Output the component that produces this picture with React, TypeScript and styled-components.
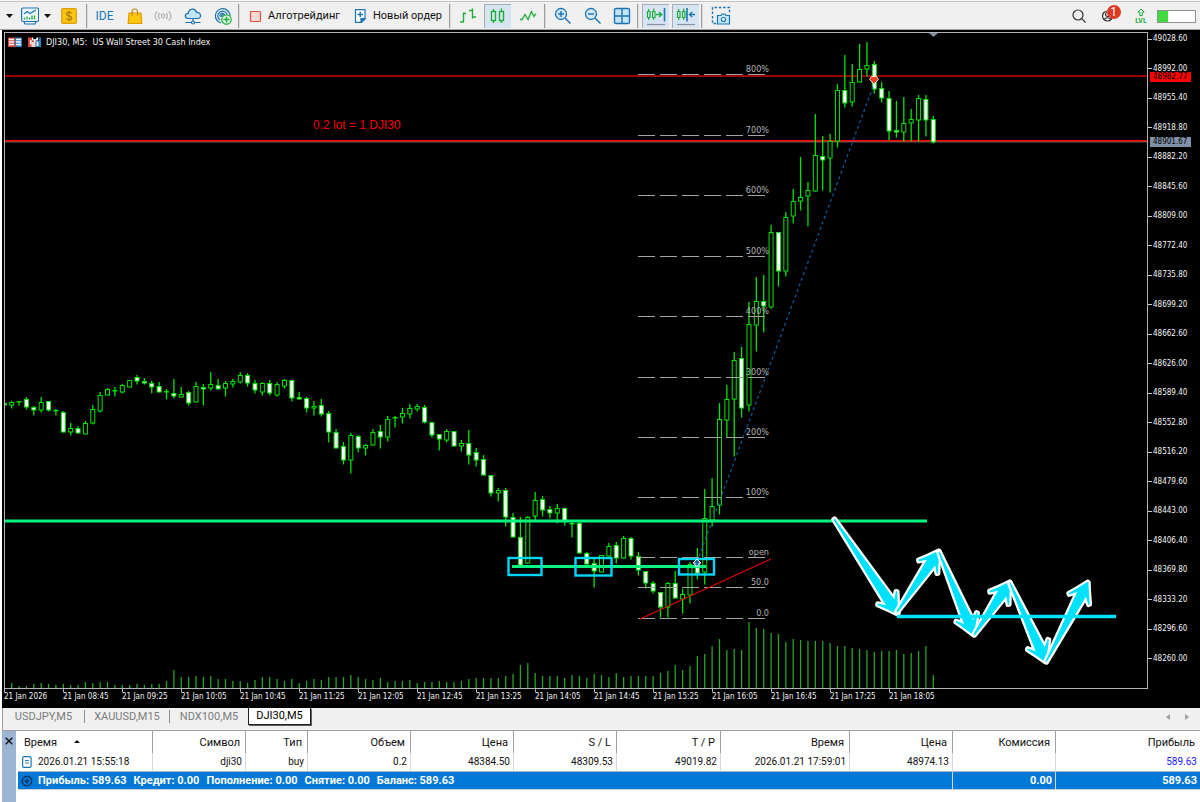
import React from "react";
import styled, { createGlobalStyle } from "styled-components";

const UI_FONT = `Roboto, "Noto Sans", sans-serif`;
const CHART_FONT = `"DejaVu Sans Condensed", "DejaVu Sans", sans-serif`;

const GlobalStyle = createGlobalStyle`
  * { box-sizing: border-box; }
  body { margin: 0; background: #fff; font-family: ${UI_FONT}; color: #111; }
  button { font: inherit; color: inherit; border: 0; background: none; padding: 0; margin: 0; cursor: pointer; }
  svg { display: block; }
`;

const Window = styled.main`
  min-height: 100vh;
  display: flex;
  flex-direction: column;
  overflow: hidden;
`;

/* ---------- toolbar ---------- */

const Toolbar = styled.header`
  display: flex;
  align-items: center;
  height: 30px;
  padding: 2px 4px 0 2px;
  background: #f0f0f0;
  border-top: 1px solid #f8f8f8;
  border-bottom: 1px solid #a0a0a0;
  box-shadow: inset 0 1px 0 #c4c4c4;
  font-size: 11px;
  line-height: 16px;
`;

const Tool = styled.button<{ $w: number; $active?: boolean }>`
  flex: none;
  display: flex;
  align-items: center;
  justify-content: center;
  width: ${(p) => p.$w}px;
  height: 24px;
  color: #1c78b8;
  background: ${(p) => (p.$active ? "#d7e5f3" : "transparent")};
  box-shadow: ${(p) => (p.$active ? "inset 1px 1px 0 #a6adb5" : "none")};
`;

const WordTool = styled(Tool)`
  font-size: 12px;
`;

const TextTool = styled(Tool)`
  justify-content: flex-start;
  padding-left: 9px;
  gap: 5px;
  color: #111;
  white-space: nowrap;
`;

const ToolGroup = styled.div`
  display: flex;
  gap: 3px;
  padding: 0 2px 0 3px;
`;

const Separator = styled.span`
  flex: none;
  width: 2px;
  height: 24px;
  border-left: 1px solid #9c9c9c;
  border-right: 1px solid #dcdcdc;
`;

const Spacer = styled.span`
  flex: 1;
`;

const BadgeHost = styled.span`
  position: relative;
`;

const Badge = styled.span`
  position: absolute;
  left: 5px;
  top: -4px;
  width: 14px;
  height: 14px;
  border-radius: 7px;
  background: #e03a24;
  color: #fff;
  font-size: 12px;
  line-height: 14px;
  text-align: center;
`;

const Battery = styled.span`
  flex: none;
  width: 39px;
  height: 13px;
  border: 1px solid #909090;
  background: linear-gradient(90deg, #3fdc3f 10px, #fff 10px);
`;

/* ---------- chart ---------- */

const ChartArea = styled.section`
  display: grid;
  grid-template-columns: minmax(0, 1fr) 52px;
  margin-left: 2px;
  padding: 2px 0 0 2px;
  background: #000;
  color: #f4f4f4;
  font-family: ${CHART_FONT};
  font-size: 8px;
  line-height: 10px;
`;

const Plot = styled.div`
  border: 1px solid #b4b4b8;
  height: 657px;
`;

const Canvas = styled.svg`
  width: 100%;
  height: 655px;
  font-family: ${CHART_FONT};
  font-size: 9px;
`;

const PriceAxis = styled.div`
  position: relative;
`;

const PriceList = styled.ul`
  list-style: none;
  margin: 0;
  padding: 2px 0 25px;
  height: 657px;
  display: flex;
  flex-direction: column;
  justify-content: space-between;
`;

const PriceLabel = styled.li`
  display: flex;
  align-items: center;
  gap: 1px;
  &::before {
    content: "";
    width: 4px;
    height: 1px;
    background: #c8c8c8;
  }
`;

const PriceTag = styled.span<{ $top: number; $bg: string }>`
  position: absolute;
  left: 2px;
  top: ${(p) => p.$top}px;
  width: 41px;
  padding-left: 3px;
  background: ${(p) => p.$bg};
  color: #000;
`;

const TimeAxis = styled.ul`
  grid-column: 1 / -1;
  list-style: none;
  margin: 0;
  padding: 0;
  height: 19px;
  display: flex;
  overflow: hidden;
`;

const TimeLabel = styled.li`
  flex: none;
  width: 59px;
  padding-top: 3px;
  white-space: nowrap;
  background: linear-gradient(#b4b4b8, #b4b4b8) 0 0 / 1px 3px no-repeat;
`;

/* ---------- chart tabs ---------- */

const TabBar = styled.nav`
  display: flex;
  height: 22px;
  margin-left: 2px;
  padding-right: 4px;
  background: #f0f0f0;
  border-left: 1px solid #a0a0a0;
  font-size: 11px;
  line-height: 16px;
  color: #7c7c7c;
`;

const Tab = styled.button<{ $w: number; $active?: boolean }>`
  flex: none;
  height: 17px;
  width: ${(p) => p.$w}px;
  ${(p) =>
    p.$active &&
    `background: #fff; color: #000; border: 1px solid #202020; border-top: 0; box-shadow: 1px 1px 0 #606060;`}
`;

const TabDivider = styled.span`
  flex: none;
  width: 1px;
  height: 13px;
  margin-top: 2px;
  background: #909090;
`;

const Scroller = styled.button`
  width: 19px;
  height: 17px;
  display: flex;
  align-items: center;
  justify-content: center;
`;

/* ---------- trade table ---------- */

const Terminal = styled.section`
  flex: 1;
  display: grid;
  grid-template-columns: 14px minmax(0, 1fr);
  margin-left: 2px;
  border-top: 1px solid #a0a0a0;
`;

const Gutter = styled.div`
  background: #9bb4d4;
  padding-top: 5px;
`;

const CloseButton = styled.button`
  display: flex;
  width: 14px;
  height: 9px;
  justify-content: center;
  align-items: center;
`;

const Trades = styled.table`
  width: calc(100% - 2px);
  margin-left: 2px;
  table-layout: fixed;
  border-collapse: separate;
  border-spacing: 0;
  font-size: 11px;
  line-height: 18px;
  align-self: start;
  white-space: nowrap;
`;

const Th = styled.th<{ $left?: boolean }>`
  height: 22px;
  padding: 2px 5px 0 6px;
  font-weight: 400;
  text-align: ${(p) => (p.$left ? "left" : "right")};
  border-right: 1px solid #a0a0a0;
  &:last-child { border-right: 0; }
`;

const Td = styled.td<{ $left?: boolean; $color?: string }>`
  height: 18px;
  padding: 0 3px;
  font-size: 10px;
  text-align: ${(p) => (p.$left ? "left" : "right")};
  color: ${(p) => p.$color ?? "inherit"};
  border-right: 1px solid #d8d8d8;
  &:last-child { border-right: 0; }
`;

const TotalTd = styled(Td)`
  font-size: 11px;
  line-height: 17px;
  background: #0078d7;
  color: #fff;
  font-weight: 700;
  border-top: 1px solid #a8b8c8;
  border-bottom: 1px solid #c8d0d8;
`;

const CellLine = styled.span`
  display: flex;
  align-items: center;
  gap: 5px;
`;

const Totals = styled.span`
  display: flex;
  gap: 7px;
`;

const SortMark = styled.span`
  display: inline-block;
  margin-left: 17px;
  vertical-align: 3px;
  border: 3px solid transparent;
  border-top: 0;
  border-bottom: 3px solid #111;
`;

/* ---------- data ---------- */

// high, body top, body bottom, low, 1 = falling (solid) body
type Candle = [number, number, number, number, 0 | 1];

const candles: Candle[] = [
  [402, 403, 405, 405, 1], [401, 402, 405, 408, 0], [401, 401, 402, 405, 0], [397, 399, 407, 409, 1],
  [406, 407, 410, 415, 1], [397, 402, 410, 412, 0], [401, 401, 410, 411, 1], [409, 410, 411, 415, 1],
  [411, 412, 432, 432, 1], [423, 428, 432, 435, 0], [426, 428, 433, 433, 1], [421, 423, 434, 434, 0],
  [405, 409, 423, 424, 0], [392, 395, 411, 412, 0], [388, 389, 395, 395, 0], [387, 390, 391, 396, 1],
  [384, 385, 392, 393, 0], [380, 380, 387, 387, 0], [375, 377, 381, 384, 1], [378, 381, 383, 384, 1],
  [381, 383, 387, 393, 1], [382, 386, 392, 392, 1], [389, 391, 392, 399, 1], [379, 393, 396, 398, 1],
  [387, 394, 397, 397, 0], [391, 392, 403, 405, 1], [382, 386, 402, 402, 0], [384, 387, 389, 405, 1],
  [372, 384, 388, 390, 0], [379, 385, 389, 389, 1], [381, 383, 388, 396, 0], [379, 381, 384, 387, 0],
  [372, 375, 382, 383, 0], [373, 375, 383, 386, 1], [380, 383, 390, 393, 1], [382, 383, 392, 395, 0],
  [380, 383, 393, 395, 1], [382, 384, 395, 396, 0], [379, 380, 386, 388, 0], [380, 380, 398, 401, 1],
  [392, 397, 399, 399, 1], [397, 398, 408, 412, 1], [401, 406, 408, 415, 0], [399, 405, 414, 416, 1],
  [411, 413, 432, 442, 1], [429, 432, 448, 448, 1], [442, 446, 460, 464, 1], [433, 435, 460, 473, 0],
  [435, 436, 448, 452, 1], [444, 445, 448, 455, 0], [429, 432, 445, 445, 0], [425, 431, 437, 448, 1],
  [416, 419, 437, 441, 0], [416, 417, 418, 427, 1], [408, 413, 417, 423, 0], [404, 408, 414, 418, 0],
  [404, 406, 409, 411, 0], [405, 407, 422, 423, 1], [422, 422, 435, 437, 1], [434, 434, 439, 450, 1],
  [429, 431, 440, 442, 0], [431, 431, 446, 446, 1], [440, 443, 446, 451, 0], [430, 443, 455, 464, 1],
  [448, 452, 460, 466, 1], [455, 459, 475, 475, 1], [475, 475, 493, 496, 1], [488, 490, 493, 501, 0],
  [488, 490, 517, 526, 1], [513, 517, 537, 537, 1], [517, 537, 565, 565, 1], [516, 517, 563, 563, 0],
  [492, 500, 516, 520, 0], [496, 499, 510, 516, 1], [506, 509, 513, 518, 1], [504, 508, 513, 523, 0],
  [508, 508, 521, 525, 1], [522, 523, 524, 537, 1], [522, 523, 553, 553, 1], [552, 553, 564, 564, 1],
  [559, 563, 571, 587, 1], [555, 555, 572, 572, 0], [543, 546, 556, 556, 0], [542, 545, 558, 563, 1],
  [536, 538, 558, 558, 0], [537, 538, 556, 559, 1], [552, 556, 570, 575, 1], [571, 571, 583, 588, 1],
  [581, 583, 591, 593, 1], [592, 592, 607, 617, 1], [582, 583, 607, 617, 0], [571, 583, 598, 598, 1],
  [589, 594, 599, 613, 0], [562, 564, 595, 603, 0], [548, 563, 573, 579, 1], [489, 518, 572, 584, 0],
  [478, 506, 520, 526, 0], [403, 419, 505, 514, 0], [385, 399, 420, 437, 0], [352, 360, 399, 456, 0],
  [347, 358, 408, 417, 1], [302, 324, 405, 411, 0], [277, 301, 325, 351, 0], [275, 301, 306, 332, 1],
  [225, 232, 307, 308, 0], [232, 232, 271, 286, 1], [212, 217, 271, 276, 0], [189, 201, 216, 223, 0],
  [157, 197, 201, 210, 0], [182, 190, 196, 226, 0], [114, 155, 191, 191, 0], [136, 156, 160, 190, 1],
  [134, 141, 158, 192, 0], [84, 90, 141, 147, 0], [55, 90, 103, 107, 1], [64, 82, 102, 106, 0],
  [44, 69, 82, 82, 0], [42, 65, 69, 76, 0], [61, 64, 89, 93, 1], [82, 88, 98, 102, 1],
  [91, 98, 131, 140, 1], [101, 130, 132, 137, 1], [97, 123, 132, 141, 0], [109, 119, 123, 141, 0],
  [95, 98, 120, 141, 0], [95, 99, 120, 136, 1], [116, 119, 142, 143, 1],
];

const volumeTops = [
  688, 683, 686, 686, 684, 683, 684, 685, 684, 685, 685, 682, 683, 682, 682, 685, 685, 685, 684, 685, 684, 684, 681,
  670, 677, 677, 676, 677, 676, 679, 679, 681, 681, 683, 680, 677, 677, 679, 681, 679, 683, 681, 679, 680, 677, 677,
  677, 675, 677, 679, 680, 678, 682, 681, 681, 680, 683, 682, 682, 681, 682, 682, 681, 679, 678, 678, 678, 678, 676,
  674, 665, 663, 673, 676, 676, 676, 678, 675, 676, 678, 674, 675, 677, 673, 677, 676, 676, 676, 676, 673, 671, 665,
  670, 666, 656, 654, 646, 639, 650, 649, 650, 622, 628, 629, 633, 634, 642, 639, 640, 641, 641, 641, 643, 646, 646,
  648, 649, 650, 652, 651, 651, 650, 654, 653, 651, 646, 675,
];

const fibLevels: [string, number][] = [
  ["800%", 75], ["700%", 136], ["600%", 196], ["500%", 257], ["400%", 317], ["300%", 378], ["200%", 438],
  ["100%", 498], ["open", 558], ["50.0", 588], ["0.0", 619],
];

const prices = Array.from({ length: 22 }, (_, i) => (49028.6 - 36.6 * i).toFixed(2));

const times = [
  "21 Jan 2026", "21 Jan 08:45", "21 Jan 09:25", "21 Jan 10:05", "21 Jan 10:45", "21 Jan 11:25", "21 Jan 12:05",
  "21 Jan 12:45", "21 Jan 13:25", "21 Jan 14:05", "21 Jan 14:45", "21 Jan 15:25", "21 Jan 16:05", "21 Jan 16:45",
  "21 Jan 17:25", "21 Jan 18:05",
];

const arrows = [
  [834, 519, 898, 614],
  [897, 612, 939, 551],
  [939, 552, 974, 635],
  [974, 635, 1010, 582],
  [1010, 583, 1046, 662],
  [1046, 662, 1088, 582],
];

const columns: [string, number | undefined][] = [
  ["Время", 135], ["Символ", 93], ["Тип", 62], ["Объем", 103], ["Цена", 103], ["S / L", 103], ["T / P", 104],
  ["Время", 129], ["Цена", 103], ["Комиссия", 103], ["Прибыль", undefined],
];

const deal = ["dji30", "buy", "0.2", "48384.50", "48309.53", "49019.82", "2026.01.21 17:59:01", "48974.13", ""];

const totals = ["Прибыль: 589.63", "Кредит: 0.00", "Пополнение: 0.00", "Снятие: 0.00", "Баланс: 589.63"];

/* ---------- chart drawing ---------- */

const candleX = (i: number) => 4.3 + i * 7.373;

// A tapering shaft that ends in a swept-back, barbed head.
function arrowPath([x1, y1, x2, y2]: number[]) {
  const len = Math.hypot(x2 - x1, y2 - y1);
  const ux = (x2 - x1) / len;
  const uy = (y2 - y1) / len;
  const at = (back: number, side: number) =>
    `${(x2 - ux * back - uy * side).toFixed(1)},${(y2 - uy * back + ux * side).toFixed(1)}`;
  return `M${at(len, 0.7)} L${at(14, 5)} L${at(20, 11)} L${at(19, 12)} Q${at(10, 6)} ${at(0, 0.5)} L${at(0, -0.5)} Q${at(10, -6)} ${at(19, -12)} L${at(20, -11)} L${at(14, -5)} L${at(len, -0.7)} Z`;
}

function PriceChart() {
  return (
    <Canvas role="img" aria-label="DJI30 M5">
      <g transform="translate(0 -33)">
        <line x1="0" x2="100%" y1="76.2" y2="76.2" stroke="#b00000" strokeWidth="1.700" />
        <line x1="0" x2="100%" y1="141.800" y2="141.800" stroke="#8c8c98" />
        <line x1="0" x2="100%" y1="140.800" y2="140.800" stroke="#f00" strokeWidth="1.600" />
      </g>
      <g transform="translate(-5 -33)">
        <g stroke="#26a526" strokeWidth="1.300">
          {volumeTops.map((top, i) => (
            <line key={i} x1={candleX(i)} x2={candleX(i)} y1={top} y2={688} />
          ))}
        </g>
        {candles.map(([high, top, bottom, low, solid], i) => {
          const x = candleX(i);
          return (
            <g key={i} stroke="#00e400">
              <line x1={x} x2={x} y1={high} y2={top} strokeWidth="1.300" />
              <line x1={x} x2={x} y1={bottom} y2={low + 0.5} strokeWidth="1.300" />
              <rect x={x - 2} y={top + 0.5} width="4" height={Math.max(bottom - top - 0.5, 0.5)} fill={solid ? "#fff" : "#000"} />
            </g>
          );
        })}
        <line x1="697" y1="562" x2="874" y2="84" stroke="#0f5ca6" strokeDasharray="3 3" strokeWidth="1.200" />
        <g stroke="#a4a4a4" strokeDasharray="17 5">
          {fibLevels.map(([label, y]) => (
            <line key={label} x1="638" x2="765" y1={y - 0.5} y2={y - 0.5} />
          ))}
        </g>
        <g fill="#b4b4b4" textAnchor="end">
          {fibLevels.map(([label, y]) => (
            <text key={label} x="769" y={y - 3}>
              {label}
            </text>
          ))}
        </g>
        <line x1="640" y1="619" x2="771" y2="559" stroke="#e00000" strokeWidth="1.200" />
        <g stroke="#00f57e" strokeWidth="3">
          <line x1="0" x2="927" y1="521" y2="521" />
          <line x1="512" x2="706" y1="566.500" y2="566.500" />
        </g>
        <g fill="none" stroke="#00d6fa" strokeWidth="2.400">
          <rect x="508.500" y="558" width="33" height="17" />
          <rect x="575.500" y="558" width="36" height="17.500" />
          <rect x="679" y="559" width="35" height="15.500" />
        </g>
        <path d="M697 559 l4 4 -2 0 0 3 -4 0 0 -3 -2 0 z" fill="#1767b0" stroke="#fff" />
        <path d="M874 84 l-4.500 -4.500 2 -3 5 0 2 3 z" fill="#e8401c" stroke="#fff" strokeWidth=".8" />
        <path d="M929 33 h9 l-4.500 4 z" fill="#8090a4" />
        <g fill="#00e1ff" stroke="#fff" strokeWidth="4.600" strokeLinejoin="round" paintOrder="stroke">
          {arrows.map((a, i) => (
            <path key={i} d={arrowPath(a)} />
          ))}
        </g>
        <line x1="897" x2="1116" y1="616.500" y2="616.500" stroke="#00e1ff" strokeWidth="3.500" />

        <text x="313" y="129" fill="#f00000" style={{ fontFamily: '"Liberation Sans", sans-serif', fontSize: 12 }}>
          0.2 lot = 1 DJI30
        </text>
        <text x="46" y="45" fill="#f4f4f4" xmlSpace="preserve">
          {"DJI30, M5:  US Wall Street 30 Cash Index"}
        </text>

        <rect x="8" y="37.500" width="7" height="9.500" fill="#d9483c" />
        <rect x="15" y="37.500" width="7" height="9.500" fill="#2f7fc0" />
        <path d="M9 39.500h5M9 42h5M9 44.500h5M16 39.500h5M16 42h5M16 44.500h5" stroke="#fff" strokeWidth="1.300" />
        <path d="M28 37.500h4v3h3.500v6.500H28z" fill="#d9483c" />
        <path d="M41 37.500h-2.500v3.500H35.500v6H41z" fill="#2f7fc0" />
        <path d="M32 37.500h1.300v1.700h3V37.500H38v3h-2.500v2h-1.500v-2h-2zM30 40h1.500v4.500H30z" fill="#fff" />
        <path d="M31.500 42h4v5h-4z" fill="#f6d4d0" />
        <path d="M36.500 41.500h2v4.500h-2z" fill="#d8ecfa" />
      </g>
    </Canvas>
  );
}

/* ---------- icons ---------- */

const BLUE = "#1c74b4";
const GREEN = "#1fae3c";

const Icon = ({ size = 18, children }: { size?: number; children: React.ReactNode }) => (
  <svg width={size} height={size} viewBox={`0 0 ${size} ${size}`} fill="none" stroke={BLUE} strokeWidth="1.200" aria-hidden="true">
    {children}
  </svg>
);

const Caret = () => (
  <svg width="7" height="4" viewBox="0 0 7 4" aria-hidden="true">
    <path d="M0 0h7L3.500 4z" fill="#111" />
  </svg>
);

const Lens = ({ plus }: { plus?: boolean }) => (
  <Icon>
    <circle cx="7" cy="7" r="5.500" fill="#d4ecfa" strokeWidth="1.300" />
    <path d="M11 11L16.500 16.500" strokeWidth="1.400" />
    <path d={plus ? "M4 7h6M7 4v6" : "M4 7h6"} strokeWidth="1.500" />
  </Icon>
);

export default function App() {
  return (
    <>
      <GlobalStyle />
      <Window>
        <Toolbar>
          <Tool $w={14} aria-label="Меню"><Caret /></Tool>
          <Tool $w={27} aria-label="График">
            <Icon>
              <path d="M3 14.500l1 2.500h10l1-2.500" />
              <rect x=".6" y="1" width="17" height="13.500" rx="1.500" fill="#eef7fd" />
              <path d="M3 7l3-2.500 3 2 6-3.500" />
              <path d="M3.500 12.500v-2M6 12.500v-3M8.500 12.500v-2M11 12.500v-4M13.500 12.500v-4" stroke={GREEN} strokeWidth="1.300" />
            </Icon>
          </Tool>
          <Tool $w={9} aria-label="Вид графика"><Caret /></Tool>
          <Tool $w={34} aria-label="Счёт">
            <Icon size={16}>
              <rect x=".6" y=".6" width="14.800" height="14.800" rx="1.500" fill="#fcc60c" stroke="#dca00c" />
              <path d="M10.700 5.400C10 4.300 8.900 4.100 8 4.100c-1.500 0-2.600.7-2.600 1.900C5.400 8.600 10.700 7.200 10.700 10c0 1.200-1.200 2-2.700 2-1.300 0-2.300-.5-2.900-1.500M8 2.500v11" stroke="#b07c0c" />
            </Icon>
          </Tool>
          <Separator />
          <WordTool $w={33}>IDE</WordTool>
          <Tool $w={27} aria-label="Маркет">
            <Icon size={16}>
              <path d="M2 5h12l.8 10.500H1.200z" fill="#fcc60c" stroke="#dc9c08" />
              <path d="M5 7.500V4c0-4 5.500-4 5.500 0v3.500" stroke="#c08810" />
            </Icon>
          </Tool>
          <Tool $w={30} aria-label="Сигналы">
            <Icon>
              <g stroke="#b4b4b4">
                <circle cx="9" cy="9" r="1.800" />
                <path d="M5.800 6c-1.600 1.800-1.600 4.200 0 6M12.200 6c1.600 1.800 1.600 4.200 0 6M3.200 4.500c-2.600 2.700-2.600 6.300 0 9M14.800 4.500c2.600 2.700 2.600 6.300 0 9" />
              </g>
            </Icon>
          </Tool>
          <Tool $w={30} aria-label="Облако">
            <Icon>
              <path d="M4.500 11.500C.2 11.500.2 6.500 4.300 6.300 5 1 11.500 1 12.500 5.300c5-.3 5.200 6.200 1.500 6.200z" fill="#c4e6fa" />
              <path d="M9 11.500v3M1.500 15.500h5.500M11 15.500h5.500" />
              <circle cx="9" cy="15.500" r="1.500" fill="#fff" />
            </Icon>
          </Tool>
          <Tool $w={30} aria-label="VPS">
            <Icon>
              <path d="M7 16A7.300 7.300 0 1 1 16 9M6 13A4.800 4.800 0 1 1 13.300 8M6.500 10a2.300 2.300 0 1 1 4-2" />
              <circle cx="8.500" cy="8.500" r="1" />
              <circle cx="12.500" cy="12.500" r="4.700" fill="#e8faec" stroke={GREEN} />
              <path d="M9.500 12.500h6M12.500 9.500v6" stroke={GREEN} strokeWidth="1.500" />
            </Icon>
          </Tool>
          <Separator />
          <TextTool $w={105}>
            <Icon size={14}>
              <rect x="1.500" y="2.500" width="10" height="10" rx="1" fill="#fbd8d2" stroke="#e05040" />
            </Icon>
            Алготрейдинг
          </TextTool>
          <TextTool $w={104}>
            <Icon size={14}>
              <path d="M1.500 .6h9.500v9.500l-3.500 3.300h-6z" fill="#fff" strokeLinejoin="round" />
              <path d="M11 9.700h-4v3.700z" fill={BLUE} />
              <path d="M3.500 5.500h5.500M6.200 2.800v5.500" strokeWidth="1.400" />
            </Icon>
            Новый ордер
          </TextTool>
          <Separator />
          <Tool $w={33} aria-label="Бары">
            <Icon>
              <path d="M4.500 5.500v10M1 15h3.500M4.500 6.500H7M13.500 1.500v10M10 3.500h3.500M13.500 10H17" stroke={GREEN} strokeWidth="1.400" />
            </Icon>
          </Tool>
          <Tool $w={27} $active aria-label="Свечи">
            <Icon>
              <g stroke={GREEN} strokeWidth="1.400">
                <rect x="2.500" y="4.500" width="4" height="9" />
                <rect x="10.500" y="4.500" width="4" height="9" />
                <path d="M4.500 2v2.500M4.500 13.500V16M12.500 1.500v3M12.500 13.500V16" />
              </g>
            </Icon>
          </Tool>
          <Tool $w={33} aria-label="Линия">
            <Icon>
              <path d="M1 12.500h2l3-5 3 5 3.500-8 2.500 5 2-3" stroke={GREEN} strokeWidth="1.300" />
            </Icon>
          </Tool>
          <Separator />
          <Tool $w={33} aria-label="Увеличить"><Lens plus /></Tool>
          <Tool $w={27} aria-label="Уменьшить"><Lens /></Tool>
          <Tool $w={31} aria-label="Сетка окон">
            <Icon>
              <rect x="1.500" y="1.500" width="15" height="15" rx="1.500" fill="#c4e6fa" strokeWidth="1.400" />
              <path d="M9 1.500v15M1.500 9h15" strokeWidth="1.400" />
            </Icon>
          </Tool>
          <Separator />
          <ToolGroup>
            <Tool $w={27} $active aria-label="Автопрокрутка">
              <Icon size={20}>
                <path d="M1.500 5.500h2.500v6H1.500zM6.500 5.500H9v6H6.500zM2.700 3v2.500M2.700 11.500V14M7.700 2.500v3M7.700 11.500V14" stroke={GREEN} />
                <path d="M10 8.500h5.500M13 6l2.700 2.500L13 11" stroke={GREEN} strokeWidth="1.400" />
                <path d="M18.500 2v13.500" strokeWidth="1.600" />
                <path d="M1 18.500h18" stroke="#8c9096" />
              </Icon>
            </Tool>
            <Tool $w={27} $active aria-label="Сдвиг графика">
              <Icon size={20}>
                <path d="M1.500 5.500h2.500v6H1.500zM6.500 5.500H9v6H6.500zM2.700 3v2.500M2.700 11.500V14M7.700 2.500v3M7.700 11.500V14" stroke={GREEN} />
                <path d="M11 2v13.500" strokeWidth="1.600" />
                <path d="M13.500 8.500h5.500M16.200 6L13.500 8.500l2.700 2.500" strokeWidth="1.400" />
                <path d="M1 18.500h18" stroke="#8c9096" />
              </Icon>
            </Tool>
          </ToolGroup>
          <Separator />
          <Tool $w={36} aria-label="Снимок экрана">
            <Icon size={20}>
              <path d="M5 17.500H1.500v-16h17V7" strokeDasharray="2.500 1.800" strokeWidth="1.400" />
              <path d="M7.500 9.500H10l1-1.500h3l1 1.500h3.500v8.500h-12V9.500z" fill="#c4e6fa" />
              <circle cx="12.500" cy="13.500" r="2" fill="#fff" />
            </Icon>
          </Tool>
          <Spacer />
          <Tool $w={26} aria-label="Поиск">
            <Icon size={14}>
              <circle cx="6" cy="6" r="5" stroke="#333" />
              <path d="M9.700 9.700l3.800 3.800" stroke="#333" />
            </Icon>
          </Tool>
          <Tool $w={33} aria-label="Профиль">
            <BadgeHost>
              <Icon size={14}>
                <circle cx="5.500" cy="7" r="5" stroke="#333" />
                <circle cx="5.500" cy="5.500" r="2" stroke="#333" />
                <path d="M2 11c1-3 6-3 7 0" stroke="#333" />
              </Icon>
              <Badge>1</Badge>
            </BadgeHost>
          </Tool>
          <Tool $w={32} aria-label="LVL">
            <svg width="14" height="16" viewBox="0 0 14 16" fill="none" stroke={GREEN} aria-hidden="true">
              <path d="M7 1L3.800 4.200H5.800V7.500H8.200V4.200H10.200z" />
              <text x="7" y="15" textAnchor="middle" fill={GREEN} stroke="none" fontSize="7" fontWeight="700">
                LVL
              </text>
            </svg>
          </Tool>
          <Battery />
        </Toolbar>

        <ChartArea>
          <Plot>
            <PriceChart />
          </Plot>
          <PriceAxis>
            <PriceList>
              {prices.map((p) => (
                <PriceLabel key={p}>{p}</PriceLabel>
              ))}
            </PriceList>
            <PriceTag $top={40} $bg="#ff0000">48982.77</PriceTag>
            <PriceTag $top={105} $bg="#8090a8">48901.67</PriceTag>
          </PriceAxis>
          <TimeAxis>
            {times.map((t) => (
              <TimeLabel key={t}>{t}</TimeLabel>
            ))}
          </TimeAxis>
        </ChartArea>

        <TabBar aria-label="Графики">
          <Tab $w={81}>USDJPY,M5</Tab>
          <TabDivider />
          <Tab $w={84}>XAUUSD,M15</Tab>
          <TabDivider />
          <Tab $w={78}>NDX100,M5</Tab>
          <Tab $w={63} $active>DJI30,M5</Tab>
          <Spacer />
          <Scroller aria-label="Назад">
            <svg width="4" height="6" viewBox="0 0 4 6"><path d="M4 0v6L0 3z" fill="#a0a0a0" /></svg>
          </Scroller>
          <Scroller aria-label="Вперёд">
            <svg width="4" height="6" viewBox="0 0 4 6"><path d="M0 0v6l4-3z" fill="#a0a0a0" /></svg>
          </Scroller>
        </TabBar>

        <Terminal>
          <Gutter>
            <CloseButton aria-label="Закрыть">
              <svg width="8" height="8" viewBox="0 0 8 8"><path d="M.7.7l6.600 6.600M7.300.7L.7 7.300" stroke="#111" strokeWidth="1.400" /></svg>
            </CloseButton>
          </Gutter>
          <Trades>
            <colgroup>
              {columns.map(([, w], i) => (
                <col key={i} width={w} />
              ))}
            </colgroup>
            <thead>
              <tr>
                {columns.map(([name], i) => (
                  <Th key={i} $left={i === 0}>
                    {name}
                    {i === 0 && <SortMark />}
                  </Th>
                ))}
              </tr>
            </thead>
            <tbody>
              <tr>
                <Td $left>
                  <CellLine>
                    <Icon size={12}>
                      <rect x="1.600" y=".6" width="8.500" height="10.800" rx="1.500" fill="#fff" />
                      <path d="M4.200 4.500h3.500M4.200 7h3.500" />
                    </Icon>
                    2026.01.21 15:55:18
                  </CellLine>
                </Td>
                {deal.map((value, i) => (
                  <Td key={i}>{value}</Td>
                ))}
                <Td $color="#1a1aff">589.63</Td>
              </tr>
              <tr>
                <TotalTd $left colSpan={9}>
                  <CellLine>
                    <Icon size={12}>
                      <circle cx="6" cy="6" r="4.800" stroke="#0c2c50" />
                      <path d="M3.500 6h5M6 3.500v5" stroke="#0c2c50" />
                    </Icon>
                    <Totals>
                      {totals.map((t) => (
                        <span key={t}>{t}</span>
                      ))}
                    </Totals>
                  </CellLine>
                </TotalTd>
                <TotalTd>0.00</TotalTd>
                <TotalTd>589.63</TotalTd>
              </tr>
            </tbody>
          </Trades>
        </Terminal>
      </Window>
    </>
  );
}
